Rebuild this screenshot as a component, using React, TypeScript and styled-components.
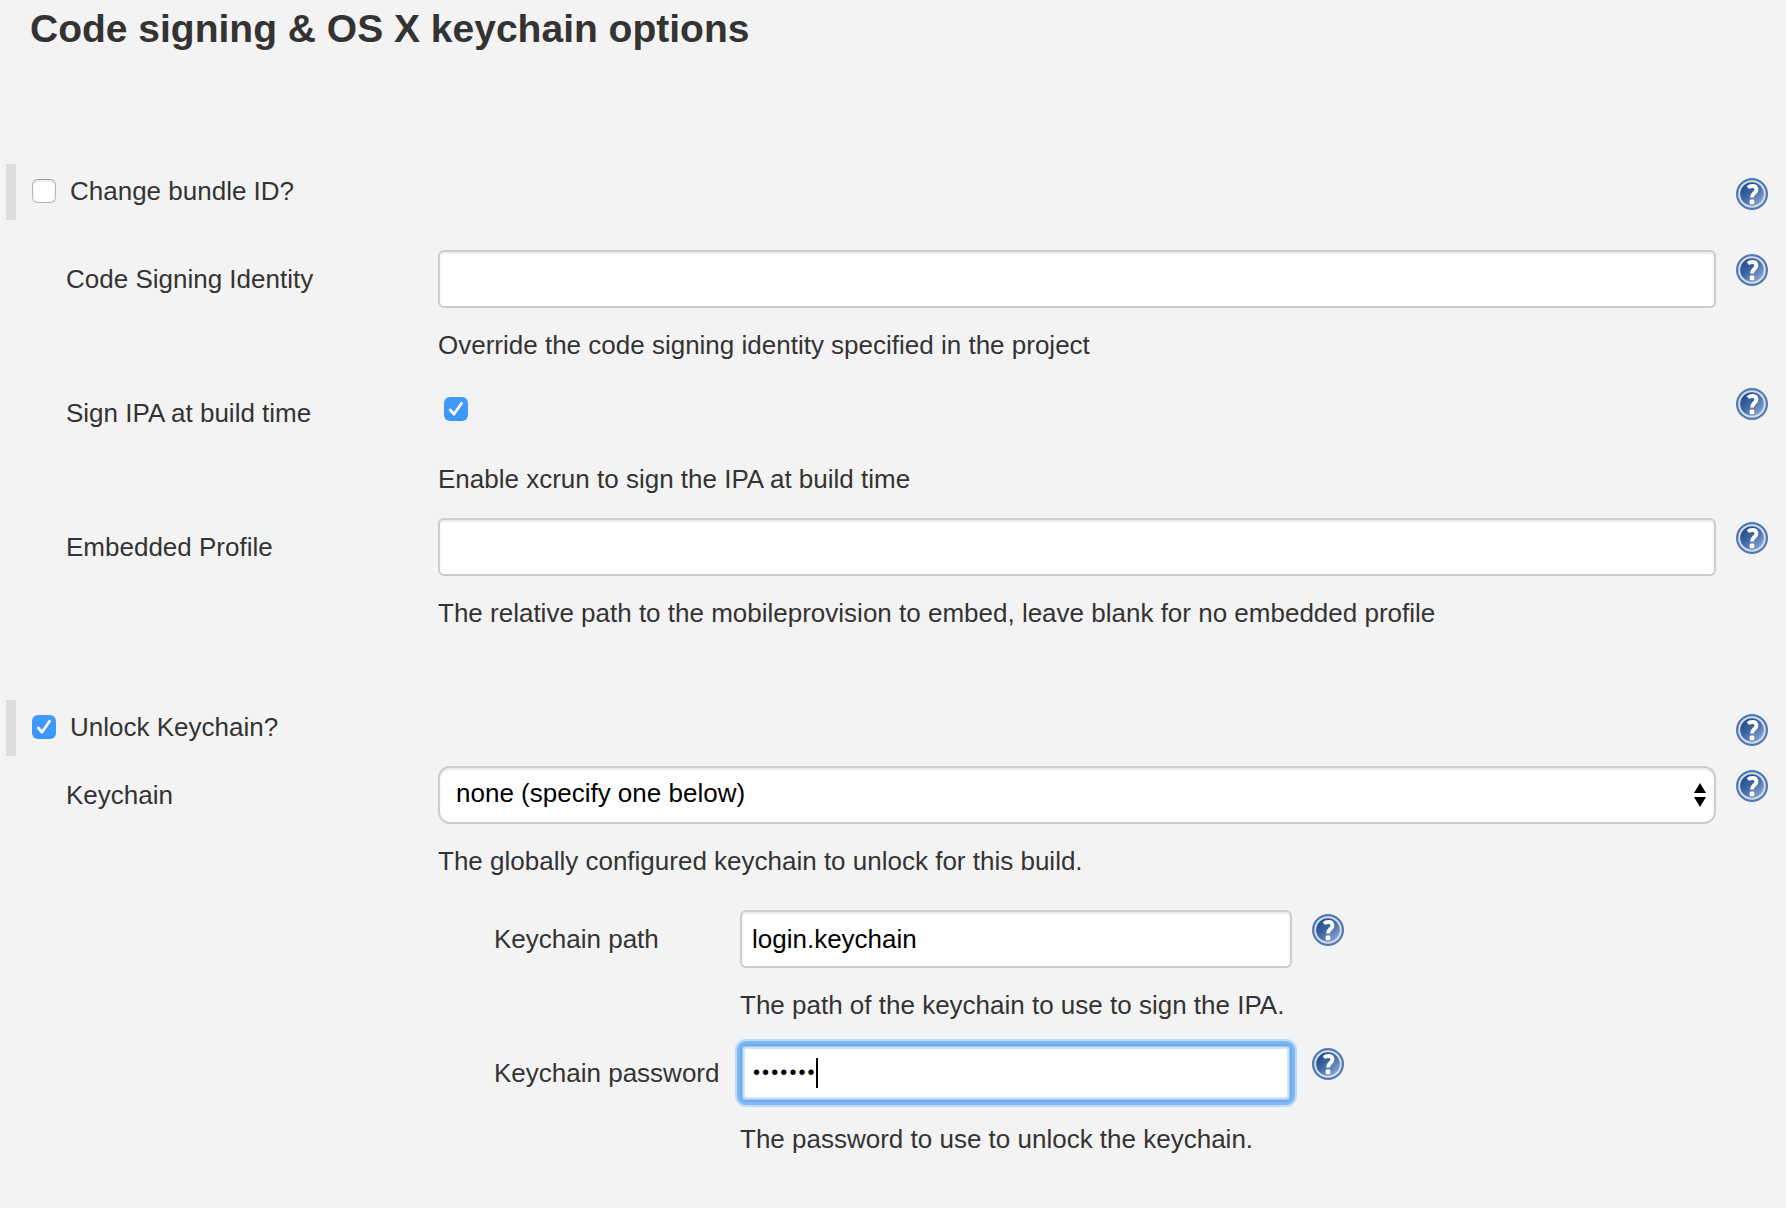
import React from 'react';
import styled, { createGlobalStyle, css } from 'styled-components';

const GlobalStyle = createGlobalStyle`
  *, *::before, *::after { box-sizing: border-box; }
  body {
    margin: 0;
    background: #f3f3f3;
    color: #333;
    font-family: "Liberation Sans", Helvetica, Arial, sans-serif;
    font-size: 26px;
    line-height: 30px;
  }
`;

const Page = styled.main`
  width: 1786px;
  height: 1208px;
  overflow: hidden;
  background: #f3f3f3;
`;

const Title = styled.h1`
  margin: 0;
  padding: 6px 0 0 30px;
  height: 164px;
  font-size: 39px;
  line-height: 46px;
  font-weight: 700;
  white-space: nowrap;
`;

const ToggleRow = styled.section<{ $gapAfter: number }>`
  display: flex;
  height: 56px;
  margin: 0 18px ${p => p.$gapAfter}px 6px;
  padding: 12px 0 0 16px;
  border-left: 10px solid #dbdbdb;
`;

const ToggleLabel = styled.label`
  display: flex;
  flex: 1;
  align-items: flex-start;
  gap: 14px;
`;

const CheckSlot = styled.span`
  display: flex;
  padding-top: 3px;
`;

const Box = styled.span<{ $checked: boolean }>`
  display: block;
  width: 24px;
  height: 24px;
  border-radius: 6px;
  ${p =>
    p.$checked
      ? css`
          background: linear-gradient(#419bfa, #3a97fc);
        `
      : css`
          background: #fff;
          border: 1px solid #b4b4b4;
          border-top-color: #999;
          box-shadow: inset 0 2px 2px rgba(0, 0, 0, 0.08);
        `}
`;

const FormRow = styled.section<{ $labelWidth: number }>`
  display: grid;
  grid-template-columns: ${p => p.$labelWidth}px 1fr 32px;
  column-gap: 0;
  height: 134px;
`;

const Settings = styled.div<{ $gapAfter?: number }>`
  padding: 0 18px 0 66px;
  margin-bottom: ${p => p.$gapAfter || 0}px;
`;

const NestedSettings = styled.div`
  width: 850px;
  margin-left: 494px;
`;

const RowLabel = styled.label`
  padding-top: 14px;
  white-space: nowrap;
`;

const Field = styled.div`
  margin-right: 20px;
  min-width: 0;
`;

const Description = styled.p`
  margin: 22px 0 0;
  white-space: nowrap;
`;

const HelpSlot = styled.div<{ $top: number }>`
  padding-top: ${p => p.$top}px;
  height: 40px;
`;

const control = css`
  display: flex;
  align-items: flex-start;
  width: 100%;
  height: 58px;
  background: #fff;
  border: 2px solid #ccc;
  color: #000;
  box-shadow: inset 0 2px 2px rgba(0, 0, 0, 0.075);
`;

const Control = styled.div<{ $focused?: boolean }>`
  ${control}
  border-radius: 6px;
  padding: 12px 10px 0;
  ${p =>
    p.$focused &&
    css`
      border-color: #70abec;
      box-shadow: 0 0 0 3px #7db8f7, 0 0 0 5px #bedbf7, inset 0 0 0 1px #9cc9f7,
        inset 0 0 0 3px #cde4fb;
    `}
`;

const Select = styled.div`
  ${control}
  justify-content: space-between;
  border-radius: 12px;
  padding: 10px 8px 0 16px;
`;

const CheckboxArea = styled.div`
  height: 58px;
  padding: 13px 0 0 6px;
`;

const Mask = styled.span`
  width: 64px;
  padding-left: 1px;
  font-size: 20px;
  line-height: 29px;
  letter-spacing: 2.1px;
  white-space: nowrap;
`;

const Caret = styled.span`
  width: 2px;
  height: 30px;
  background: #000;
`;

const IconSvg = styled.svg`
  display: block;
`;

const Arrows = styled.svg`
  display: block;
  margin-top: 5px;
`;

function Checkbox({ checked = false }: { checked?: boolean }) {
  return (
    <Box $checked={checked}>
      {checked && (
        <IconSvg width="24" height="24" viewBox="0 0 24 24" fill="none" strokeLinecap="round" strokeLinejoin="round">
          <path d="M6.3 14 L10 18.3 L17.6 7.2" stroke="#2672c8" strokeOpacity=".5" strokeWidth="2.4" />
          <path d="M6.3 13 L10 17.3 L17.6 6.3" stroke="#fff" strokeWidth="2.8" />
        </IconSvg>
      )}
    </Box>
  );
}

function HelpIcon({ top = 4 }: { top?: number }) {
  const id = React.useId();
  return (
    <HelpSlot $top={top}>
      <IconSvg width="32" height="32" viewBox="0 0 32 32" fill="none">
        <defs>
          <linearGradient id={id} x1="0.1" y1="0.1" x2="0.9" y2="0.95">
            <stop offset="0" stopColor="#1f4a8a" />
            <stop offset="0.4" stopColor="#3c65a2" />
            <stop offset="1" stopColor="#8fabd3" />
          </linearGradient>
        </defs>
        <circle cx="16" cy="16" r="16" fill="#5279b0" />
        <circle cx="16" cy="16" r="13.8" fill="#d3deed" />
        <circle cx="16" cy="16" r="11.8" fill={`url(#${id})`} />
        <path
          d="M11.9 9.6 C14.4 7.4 20.4 7 20.4 11.5 C20.4 15.2 16 15 16 19.6"
          stroke="#fff"
          strokeWidth="3.9"
        />
        <rect x="13.7" y="21.6" width="4.6" height="4.6" rx="1.2" fill="#fff" />
      </IconSvg>
    </HelpSlot>
  );
}

interface SettingProps {
  label: string;
  description: string;
  labelWidth?: number;
  children: React.ReactNode;
}

function Setting({ label, description, labelWidth = 372, children }: SettingProps) {
  return (
    <FormRow $labelWidth={labelWidth}>
      <RowLabel>{label}</RowLabel>
      <Field>
        {children}
        <Description>{description}</Description>
      </Field>
      <HelpIcon />
    </FormRow>
  );
}

function Toggle({ label, checked, gapAfter }: { label: string; checked?: boolean; gapAfter: number }) {
  return (
    <ToggleRow $gapAfter={gapAfter}>
      <ToggleLabel>
        <CheckSlot>
          <Checkbox checked={checked} />
        </CheckSlot>
        {label}
      </ToggleLabel>
      <HelpIcon top={2} />
    </ToggleRow>
  );
}

export default function App() {
  return (
    <Page>
      <GlobalStyle />
      <Title>Code signing &amp; OS X keychain options</Title>
      <Toggle label="Change bundle ID?" gapAfter={30} />
      <Settings $gapAfter={48}>
        <Setting label="Code Signing Identity" description="Override the code signing identity specified in the project">
          <Control />
        </Setting>
        <Setting label="Sign IPA at build time" description="Enable xcrun to sign the IPA at build time">
          <CheckboxArea>
            <Checkbox checked />
          </CheckboxArea>
        </Setting>
        <Setting
          label="Embedded Profile"
          description="The relative path to the mobileprovision to embed, leave blank for no embedded profile"
        >
          <Control />
        </Setting>
      </Settings>
      <Toggle label="Unlock Keychain?" checked gapAfter={10} />
      <Settings $gapAfter={10}>
        <Setting label="Keychain" description="The globally configured keychain to unlock for this build.">
          <Select>
            none (specify one below)
            <Arrows width="12" height="24" viewBox="0 0 12 24">
              <path d="M6 0 L12 10 H0 Z M0 14 H12 L6 24 Z" fill="#000" />
            </Arrows>
          </Select>
        </Setting>
      </Settings>
      <NestedSettings>
        <Setting label="Keychain path" description="The path of the keychain to use to sign the IPA." labelWidth={246}>
          <Control>login.keychain</Control>
        </Setting>
        <Setting label="Keychain password" description="The password to use to unlock the keychain." labelWidth={246}>
          <Control $focused>
            <Mask>•••••••</Mask>
            <Caret />
          </Control>
        </Setting>
      </NestedSettings>
    </Page>
  );
}
